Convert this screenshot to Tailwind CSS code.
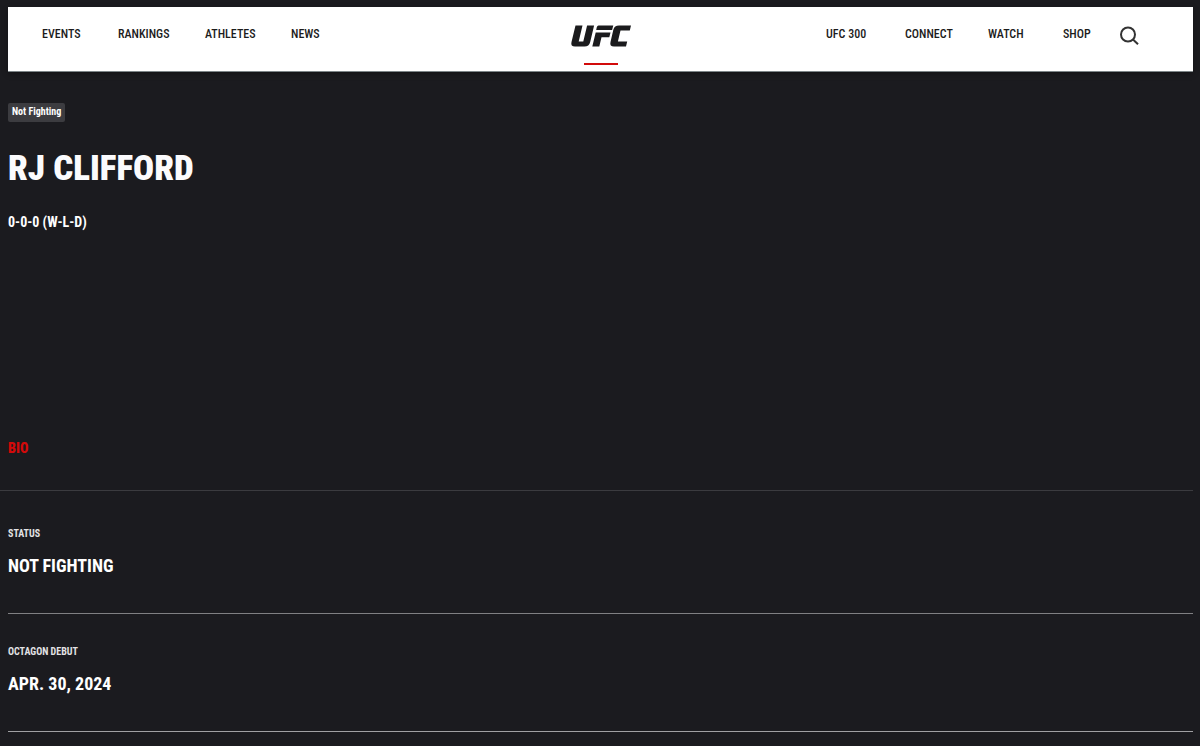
<!DOCTYPE html>
<html lang="en">
<head>
<meta charset="utf-8">
<meta name="viewport" content="width=device-width, initial-scale=1">
<title>RJ Clifford | UFC</title>
<script src="https://cdn.jsdelivr.net/npm/@tailwindcss/browser@4"></script>
</head>
<body class="min-h-screen bg-[#1b1b1f] pt-[7px] pr-[7px] pl-2 font-['Roboto_Condensed','Roboto',sans-serif] font-bold text-white">
<header class="grid h-[65px] grid-cols-[1fr_auto_1fr] items-start border-b border-[#7d8588] bg-white text-[12px] leading-5 font-medium text-[#1c1c1c] shadow-[0_2px_6px_rgba(0,0,0,0.3)]">
  <nav aria-label="Main" class="flex pt-[17px] pl-[34px]">
    <a href="#" class="w-[76px]">EVENTS</a>
    <a href="#" class="w-[87px]">RANKINGS</a>
    <a href="#" class="w-[86px]">ATHLETES</a>
    <a href="#">NEWS</a>
  </nav>
  <a href="#" aria-label="UFC home" class="flex flex-col items-center pt-[18px]">
    <svg class="h-[22px] w-[61px]" viewBox="-1 0 61 22" fill="#1b1b1d" aria-hidden="true">
      <path d="M4.500 0.500H11.500L7.700 16.500H12.300L16.100 0.500H23.100L19.200 17Q18.100 21.500 13.500 21.500H4Q-.6 21.500 .5 17Z"/>
      <path d="M27.500 0.500H42.300L41.100 5H25.200L25.700 2.500Q26.300 0.500 27.500 0.500ZM24.700 7.500H39.500L38.300 12.300H30.500L28.300 21.500H21.300Z"/>
      <path d="M48 0.500H60L58.800 5.500H49.500L46.900 16.500H56.200L55 21.500H43Q38.400 21.500 39.500 17L42.400 4.500Q43.400 0.500 48 0.500Z"/>
    </svg>
    <span class="mt-4 h-[2px] w-[34px] bg-[#d20a0a]"></span>
  </a>
  <div class="flex justify-end pt-[17px] pr-[53px]">
    <nav aria-label="More" class="flex">
      <a href="#" class="w-[79px]">UFC 300</a>
      <a href="#" class="w-[83px]">CONNECT</a>
      <a href="#" class="w-[75px]">WATCH</a>
      <a href="#" class="w-[57px]">SHOP</a>
    </nav>
    <button type="button" aria-label="Search" class="mt-[2px] h-5 w-5">
      <svg class="h-5 w-5" viewBox="0 0 20 20" fill="none" stroke="#333" stroke-width="2" aria-hidden="true"><circle cx="8" cy="8.500" r="7"/><path d="M13 13.500L18 18.300"/></svg>
    </button>
  </div>
</header>
<main>
  <section class="pt-[31px]">
    <p class="flex h-[19px] w-fit items-center rounded-xs bg-[#3c3c40] px-1 pb-[2px] text-[10px] leading-4">Not Fighting</p>
    <h1 class="mt-6 text-[35px] leading-[46px] font-black text-[#fbfbfd]">RJ CLIFFORD</h1>
    <p class="mt-5 text-[14px] leading-5">0-0-0 (W-L-D)</p>
  </section>
  <h2 class="-ml-2 mt-[206px] border-b border-[#3b3b3f] pb-8 pl-2 text-[14px] leading-5 font-black text-[#d20a0a]">BIO</h2>
  <dl>
    <div class="border-b border-[#808083] pt-[35px] pb-[35px]">
      <dt class="text-[10px] leading-4 text-[#e2e2e4]">STATUS</dt>
      <dd class="mt-3 text-[18px] leading-6">NOT FIGHTING</dd>
    </div>
    <div class="border-b border-[#a0a0a3] pt-[30px] pb-[35px]">
      <dt class="text-[10px] leading-4 text-[#e2e2e4]">OCTAGON DEBUT</dt>
      <dd class="mt-3 text-[18px] leading-6">APR. 30, 2024</dd>
    </div>
  </dl>
</main>
</body>
</html>
